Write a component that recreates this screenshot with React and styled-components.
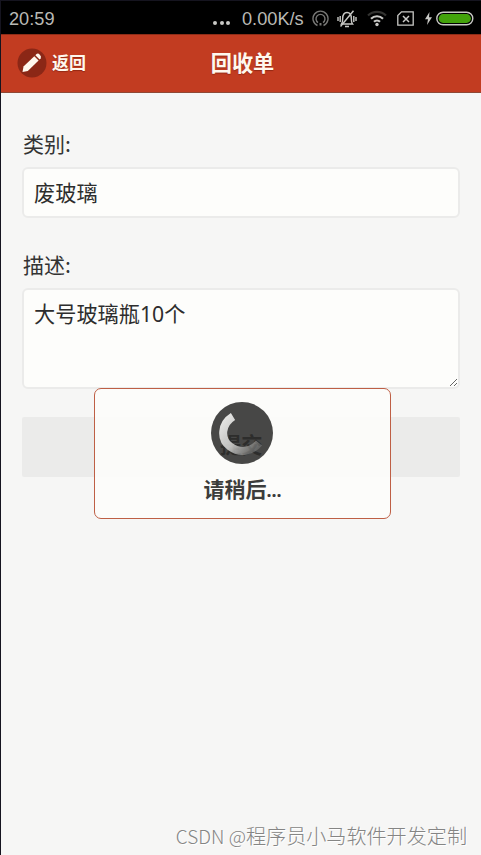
import React from 'react';
import styled, { createGlobalStyle } from 'styled-components';

const GlobalStyle = createGlobalStyle`
  * {
    box-sizing: border-box;
  }

  body {
    margin: 0;
    background: #f6f6f5;
    font-family: 'Noto Sans CJK SC', sans-serif;
  }
`;

const Screen = styled.div`
  position: relative;
  display: flex;
  flex-direction: column;
  width: 481px;
  height: 855px;
  border-left: 1px solid #15141f;
  background: #f6f6f5;
  overflow: hidden;
`;

const StatusBar = styled.div`
  display: flex;
  align-items: center;
  height: 34px;
  padding: 2px 7px 0 8px;
  border-top: 1px solid #15141f;
  background: #000;
  color: #b9b9b5;
  font-family: 'Liberation Sans', sans-serif;
  font-size: 18.2px;
  line-height: 30px;
`;

const Clock = styled.span`
  margin-right: auto;
`;

const Dots = styled.span`
  display: flex;
  gap: 2.5px;
  margin: 9px 12px 0 0;

  i {
    width: 4px;
    height: 4px;
    border-radius: 50%;
    background: #c9c9c6;
  }
`;

const Speed = styled.span`
  width: 61px;
  margin-right: 9px;
  white-space: nowrap;
`;

const StatusIcon = styled.svg`
  flex: none;
  margin-right: ${props => props.$gap || 0}px;
`;

const Header = styled.header`
  display: grid;
  grid-template-columns: 1fr auto 1fr;
  align-items: center;
  height: 59px;
  padding: 0 13px 1px 16px;
  border-top: 1px solid #8e2d18;
  border-bottom: 1px solid #8f4936;
  background: #c23c21;
  color: #fff8ee;
`;

const BackButton = styled.button`
  display: flex;
  align-items: center;
  gap: 5px;
  padding: 0;
  border: 0;
  background: none;
  color: inherit;
  font: bold 17px/24px 'Noto Sans CJK SC', sans-serif;
  text-shadow: 0 1px 1px rgba(80, 15, 0, 0.4);

  span {
    margin-bottom: 2px;
  }
`;

const Title = styled.h1`
  margin: 0 0 3px;
  font-size: 21.2px;
  font-weight: 700;
  line-height: 30px;
  text-shadow: 0 1px 1px rgba(80, 15, 0, 0.4);
`;

const Form = styled.form`
  display: flex;
  flex-direction: column;
  padding: 34px 21px 0 21px;
`;

const Label = styled.label`
  margin-bottom: 8px;
  padding-left: 1px;
  color: #333;
  font-size: 21px;
  line-height: 32px;
`;

const fieldStyles = `
  display: block;
  width: 438px;
  border: 2px solid #ebebea;
  border-radius: 6px;
  outline: 0;
  background: #fdfdfb;
  color: #2d2d2d;
  font: 21.2px/32px 'Noto Sans', 'Noto Sans CJK SC', sans-serif;
`;

const Input = styled.input`
  ${fieldStyles}
  height: 51px;
  margin-bottom: 30px;
  padding: 0 10px 2px;
`;

const TextArea = styled.textarea`
  ${fieldStyles}
  height: 101px;
  margin-bottom: 28px;
  padding: 8px 10px;
  resize: vertical;
`;

const SubmitButton = styled.button`
  width: 438px;
  height: 60px;
  padding: 0;
  border: 0;
  border-radius: 2px;
  background: #ebebea;
`;

const Loader = styled.div`
  position: absolute;
  top: 388px;
  left: 93px;
  display: flex;
  flex-direction: column;
  align-items: center;
  width: 297px;
  height: 131px;
  padding: 13px 1px 0 0;
  border: 1.5px solid #be5f45;
  border-radius: 7px;
  background: rgba(253, 253, 251, 0.9);
`;

const Spinner = styled.div`
  width: 62px;
  height: 62px;
  border-radius: 50%;
  background: #474746;
`;

const SpinnerText = styled.span`
  position: absolute;
  top: 39px;
  left: 125px;
  color: #2d2d2c;
  font-size: 21.2px;
  font-weight: 700;
  line-height: 32px;
`;

const Ring = styled.svg`
  position: absolute;
  top: 13px;
  left: 116px;
`;

const LoaderText = styled.strong`
  margin-top: 8px;
  padding-left: 1px;
  color: #3c3c3b;
  font-size: 21px;
  line-height: 32px;

  span {
    font-family: 'Noto Sans', sans-serif;
    font-size: 18px;
  }
`;

const Watermark = styled.div`
  position: absolute;
  right: 14px;
  bottom: 4px;
  color: #858584;
  font-size: 20.1px;
  font-weight: 300;
  line-height: 30px;
  text-shadow: 1px 1px 0 #fff;
  white-space: nowrap;

  span {
    font-size: 19px;
  }
`;

const HotspotIcon = () => (
  <StatusIcon $gap={8} width="17" height="17" viewBox="0 0 17 17" fill="none" stroke="#777775" strokeWidth="1.4">
    <path d="M5.5 15.5a7.5 7.5 0 1 1 6 0" />
    <path d="M6 12.600a4.500 4.500 0 1 1 5 0" />
    <path d="M8.500 13v2.500" strokeWidth="2" />
  </StatusIcon>
);

const MuteIcon = () => (
  <StatusIcon $gap={10} width="20" height="18" viewBox="0 0 20 18" fill="none" stroke="#c9c9c6" strokeWidth="1.4">
    <path d="M4.500 14c1.200-1.500 1.200-3 1.200-5.500C5.700 4.500 7.500 2.500 10 2.500s4.300 2 4.300 6c0 2.500 0 4 1.200 5.500Z" />
    <path d="M16.500.8 3.500 16.500" />
    <path d="M1 7v4M3.200 6v6M16.800 6v6M19 7v4M8 16.500h4" />
  </StatusIcon>
);

const WifiIcon = () => (
  <StatusIcon $gap={10} width="20" height="17" viewBox="0 0 20 17" fill="none" stroke="#c9c9c6" strokeWidth="2.2">
    <path d="M1 5.500a13 13 0 0 1 18 0" stroke="#333331" />
    <path d="M4 8.700a8.600 8.600 0 0 1 12 0" />
    <path d="M7 11.800a4.300 4.300 0 0 1 6 0" />
    <circle cx="10" cy="14.500" r="1.700" fill="#c9c9c6" stroke="none" />
  </StatusIcon>
);

const SimIcon = () => (
  <StatusIcon $gap={10} width="17" height="15" viewBox="0 0 17 15" fill="none" stroke="#c9c9c6" strokeWidth="1.3">
    <path d="M4.500.8h11.700v13.400H.8V4.500Z" />
    <path d="m6 5 6 6M12 5l-6 6" strokeWidth="1.500" />
  </StatusIcon>
);

const BatteryIcon = () => (
  <StatusIcon width="50" height="15" viewBox="0 0 50 15" fill="none">
    <path d="M5.500 1 1 8.300h3L3 14l5-7.800H5Z" fill="#c9c9c6" />
    <rect x="12.800" y="1.200" width="36" height="12.600" rx="6.300" stroke="#c9c9c6" strokeWidth="1.400" />
    <rect x="14.700" y="3.100" width="32.200" height="8.800" rx="4.400" fill="#43a30b" />
  </StatusIcon>
);

const EditIcon = () => (
  <svg width="30" height="30" viewBox="0 0 30 30">
    <circle cx="15" cy="15" r="14.500" fill="#8b2716" />
    <path d="m5.500 24 1-5.500L17.300 8.300l4.300 4.300L10.800 23Z" fill="#fff8ee" />
    <path d="m18.400 7.200 1.100-1.100q1.500-1.200 3.300.6t.9 3.600l-1.100 1.200Z" fill="#fff8ee" />
  </svg>
);

const App = () => {
  const [category, setCategory] = React.useState('废玻璃');
  const [description, setDescription] = React.useState('大号玻璃瓶10个');

  return (
    <>
      <GlobalStyle />
      <Screen>
        <StatusBar>
          <Clock>20:59</Clock>
          <Dots><i /><i /><i /></Dots>
          <Speed>0.00K/s</Speed>
          <HotspotIcon />
          <MuteIcon />
          <WifiIcon />
          <SimIcon />
          <BatteryIcon />
        </StatusBar>
        <Header>
          <BackButton type="button">
            <EditIcon />
            <span>返回</span>
          </BackButton>
          <Title>回收单</Title>
        </Header>
        <Form onSubmit={event => event.preventDefault()}>
          <Label htmlFor="category">类别:</Label>
          <Input id="category" value={category} onChange={event => setCategory(event.target.value)} />
          <Label htmlFor="description">描述:</Label>
          <TextArea id="description" value={description} onChange={event => setDescription(event.target.value)} />
          <SubmitButton type="submit" aria-label="提交" />
        </Form>
        <Loader>
          <Spinner />
          <SpinnerText>提交</SpinnerText>
          <Ring width="62" height="62" viewBox="0 0 62 62" fill="none">
            <defs>
              <linearGradient id="ring" x1="12" y1="18" x2="47" y2="48" gradientUnits="userSpaceOnUse">
                <stop offset="0" stopColor="#e4e4e2" />
                <stop offset="0.5" stopColor="#cececc" stopOpacity="0.9" />
                <stop offset="1" stopColor="#858583" stopOpacity="0.45" />
              </linearGradient>
            </defs>
            <path d="M22 14.500C10 22 9 37 19 44.500S41 49.500 48 41" stroke="url(#ring)" strokeWidth="8" />
          </Ring>
          <LoaderText>请稍后<span>...</span></LoaderText>
        </Loader>
        <Watermark><span>CSDN @</span>程序员小马软件开发定制</Watermark>
      </Screen>
    </>
  );
};

export default App;
